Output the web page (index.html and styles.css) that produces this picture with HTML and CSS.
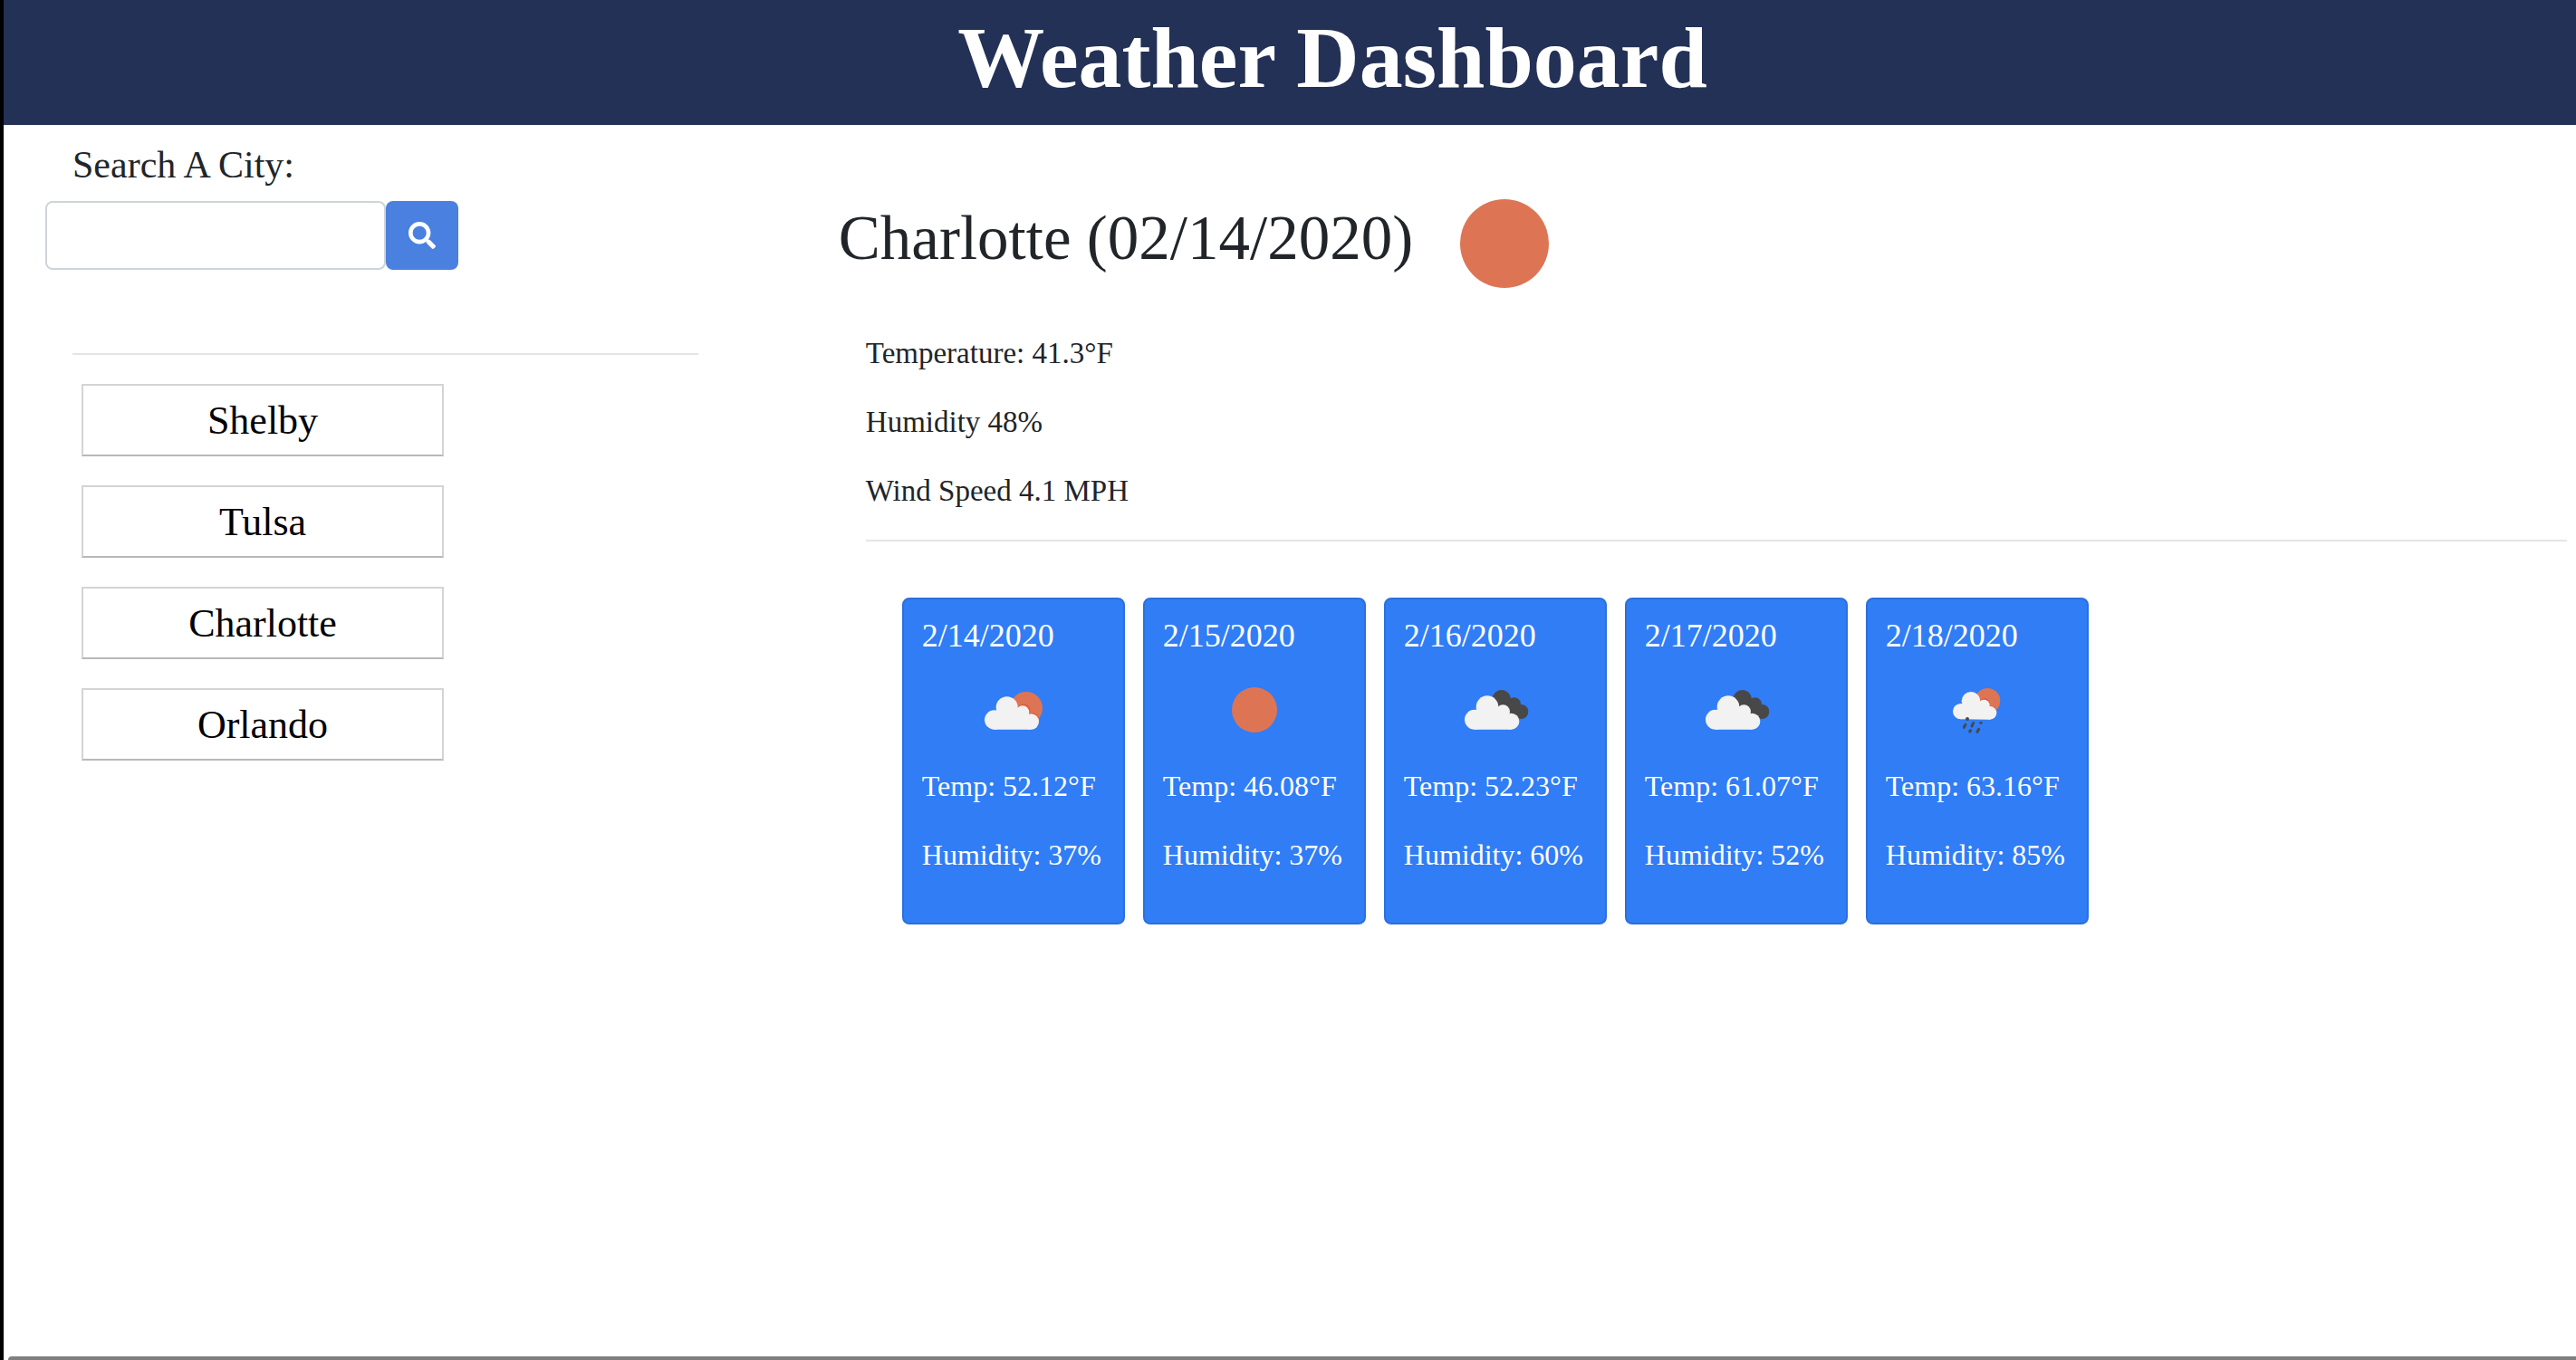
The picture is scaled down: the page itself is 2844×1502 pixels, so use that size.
FILE: index.html
```html
<!DOCTYPE html>
<html lang="en">
<head>
<meta charset="utf-8">
<meta name="viewport" content="width=device-width, initial-scale=1">
<title>Weather Dashboard</title>
<link rel="stylesheet" href="styles.css">
</head>
<body>
<header class="banner">
  <h1 class="banner-title">Weather Dashboard</h1>
</header>

<div class="layout">
  <aside class="sidebar">
    <form class="search">
      <label class="search-label" for="city">Search A City:</label>
      <div class="search-row">
        <input class="search-input" id="city" type="text">
        <button class="search-button" type="button" aria-label="Search">
          <svg class="search-icon" viewBox="0 0 512 512" aria-hidden="true"><path fill="currentColor" d="M505 442.700L405.300 343c-4.500-4.500-10.600-7-17-7H372c27.600-35.300 44-79.700 44-128C416 93.100 322.900 0 208 0S0 93.100 0 208s93.100 208 208 208c48.300 0 92.700-16.400 128-44v16.300c0 6.400 2.500 12.500 7 17l99.700 99.700c9.400 9.400 24.600 9.400 33.900 0l28.300-28.300c9.400-9.400 9.400-24.600.1-34zM208 336c-70.700 0-128-57.200-128-128 0-70.700 57.200-128 128-128 70.700 0 128 57.200 128 128 0 70.700-57.200 128-128 128z"/></svg>
        </button>
      </div>
    </form>
    <hr class="rule sidebar-rule">
    <nav class="history" aria-label="Recent cities">
      <button class="history-button" type="button">Shelby</button>
      <button class="history-button" type="button">Tulsa</button>
      <button class="history-button" type="button">Charlotte</button>
      <button class="history-button" type="button">Orlando</button>
    </nav>
  </aside>

  <main class="content">
    <div class="current">
      <h2 class="current-title">Charlotte (02/14/2020)</h2>
      <svg class="current-icon" viewBox="0 0 98 98" role="img" aria-label="Clear sky"><circle class="sun" cx="49" cy="49" r="49"/></svg>
    </div>
    <div class="details">
      <p class="reading">Temperature: 41.3°F</p>
      <p class="reading">Humidity 48%</p>
      <p class="reading">Wind Speed 4.1 MPH</p>
      <hr class="rule details-rule">
    </div>
    <section class="forecast" aria-label="Five day forecast">
      <article class="card">
        <h3 class="card-date">2/14/2020</h3>
        <svg class="card-icon" viewBox="-6 -18 300 300" role="img" aria-label="Few clouds">
          <circle class="sun" cx="186" cy="126" r="54"/>
          <g class="sun-shade"><circle cx="178" cy="134" r="22"/><circle cx="206" cy="166" r="24"/></g>
          <g class="cloud"><circle cx="80" cy="165" r="32"/><circle cx="122" cy="124" r="36"/><circle cx="174" cy="140" r="22"/><circle cx="202" cy="171" r="26"/><path d="M80 197V150L122 120L174 130L202 160V197Z"/></g>
        </svg>
        <p class="card-text">Temp: 52.12°F</p>
        <p class="card-text">Humidity: 37%</p>
      </article>
      <article class="card">
        <h3 class="card-date">2/15/2020</h3>
        <svg class="card-icon" viewBox="0 0 100 100" role="img" aria-label="Clear sky"><circle class="sun" cx="50" cy="50" r="25"/></svg>
        <p class="card-text">Temp: 46.08°F</p>
        <p class="card-text">Humidity: 37%</p>
      </article>
      <article class="card">
        <h3 class="card-date">2/16/2020</h3>
        <svg class="card-icon" viewBox="6 -18 300 300" role="img" aria-label="Broken clouds">
          <g class="dark-cloud"><circle cx="176" cy="97" r="31"/><circle cx="218" cy="113" r="22"/><circle cx="241" cy="138" r="24"/><circle cx="205" cy="134" r="30"/></g>
          <g class="cloud"><circle cx="87" cy="164" r="33"/><circle cx="129" cy="122" r="37"/><circle cx="181" cy="138" r="23"/><circle cx="208" cy="170" r="27"/><path d="M87 197V150L129 118L181 130L208 160V197Z"/></g>
        </svg>
        <p class="card-text">Temp: 52.23°F</p>
        <p class="card-text">Humidity: 60%</p>
      </article>
      <article class="card">
        <h3 class="card-date">2/17/2020</h3>
        <svg class="card-icon" viewBox="6 -18 300 300" role="img" aria-label="Broken clouds">
          <g class="dark-cloud"><circle cx="176" cy="97" r="31"/><circle cx="218" cy="113" r="22"/><circle cx="241" cy="138" r="24"/><circle cx="205" cy="134" r="30"/></g>
          <g class="cloud"><circle cx="87" cy="164" r="33"/><circle cx="129" cy="122" r="37"/><circle cx="181" cy="138" r="23"/><circle cx="208" cy="170" r="27"/><path d="M87 197V150L129 118L181 130L208 160V197Z"/></g>
        </svg>
        <p class="card-text">Temp: 61.07°F</p>
        <p class="card-text">Humidity: 52%</p>
      </article>
      <article class="card">
        <h3 class="card-date">2/18/2020</h3>
        <svg class="card-icon" viewBox="15 -18 300 300" role="img" aria-label="Rain">
          <circle class="sun" cx="199" cy="102" r="42"/>
          <g class="sun-shade"><circle cx="190" cy="111" r="18"/><circle cx="210" cy="138" r="19"/></g>
          <g class="cloud"><circle cx="110" cy="137" r="26"/><circle cx="144" cy="103" r="31"/><circle cx="187" cy="117" r="19"/><circle cx="207" cy="142" r="22"/><path d="M110 163V124L144 98L187 110L207 134V164Z"/></g>
          <g class="drops"><circle cx="132" cy="162" r="6"/><path d="M126 181L121 190M152 176L147 186M143 200L140 204M170 196L165 205"/><circle cx="177" cy="175" r="5"/></g>
        </svg>
        <p class="card-text">Temp: 63.16°F</p>
        <p class="card-text">Humidity: 85%</p>
      </article>
    </section>
  </main>
</div>
<footer class="bottom-edge"></footer>
</body>
</html>
```

FILE: styles.css
```css
* {
  box-sizing: border-box;
}

body {
  margin: 0;
  min-height: 100vh;
  display: flex;
  flex-direction: column;
  border-left: 4px solid #000;
  background: #fff;
  color: #212529;
  font-family: "Liberation Serif", serif;
}

h1, h2, h3, p {
  margin: 0;
}

button, input {
  font-family: inherit;
}

.banner {
  padding: 16px 0 26px 94px;
  background: #243156;
  color: #fff;
  text-align: center;
}

.banner-title {
  font-size: 96px;
  line-height: 96px;
  font-weight: 700;
}

.layout {
  flex: 1;
  display: grid;
  grid-template-columns: 27% 1fr;
}

.rule {
  height: 2px;
  border: 0;
  background: #e5e5e5;
}

/* Search and history */

.sidebar {
  padding: 19px 0 0 46px;
}

.search-label {
  display: block;
  margin: 0 0 15px 30px;
  font-size: 42px;
  line-height: 50px;
}

.search-row {
  display: flex;
}

.search-input {
  width: 376px;
  height: 76px;
  padding: 12px 24px;
  border: 2px solid #ced4da;
  border-radius: 8px;
  background: #fff;
  color: #495057;
  font-size: 32px;
}

.search-button {
  display: flex;
  align-items: center;
  justify-content: center;
  width: 80px;
  height: 76px;
  padding: 0;
  border: 0;
  border-radius: 8px;
  background: #4a80df;
  color: #fff;
}

.search-icon {
  width: 30px;
  height: 30px;
}

.sidebar-rule {
  margin: 92px 0 32px 30px;
}

.history {
  display: flex;
  flex-direction: column;
  gap: 32px;
  margin-left: 40px;
}

.history-button {
  width: 400px;
  height: 80px;
  padding: 0;
  border: 2px solid #d4d4d4;
  border-bottom-color: #b8b8b8;
  background: #fff;
  color: #000;
  font-size: 44px;
}

/* Current conditions */

.content {
  padding: 82px 10px 0 155px;
}

.current {
  display: flex;
  align-items: flex-start;
  gap: 52px;
}

.current-title {
  font-size: 69px;
  line-height: 86px;
  font-weight: 400;
}

.current-icon {
  width: 98px;
  height: 98px;
}

.details {
  display: flex;
  flex-direction: column;
  gap: 28px;
  margin: 48px 0 62px 30px;
}

.reading {
  font-size: 33px;
  line-height: 48px;
}

.details-rule {
  width: 100%;
  margin: 2px 0 0;
}

/* Five day forecast */

.forecast {
  display: flex;
  gap: 20px;
  margin-left: 70px;
}

.card {
  width: 246px;
  padding: 16px 20px 23px;
  border: 2px solid #2b70dc;
  border-radius: 8px;
  background: #307df6;
  color: #fff;
  white-space: nowrap;
}

.card-date {
  font-size: 36px;
  line-height: 48px;
  font-weight: 400;
}

.card-icon {
  display: block;
  width: 100px;
  height: 100px;
  margin: 8px auto 10px;
}

.card-text {
  margin-bottom: 28px;
  font-size: 32px;
  line-height: 48px;
}

.sun {
  fill: #dd7555;
}

.sun-shade {
  fill: #dc6042;
}

.cloud {
  fill: #f2f2f2;
}

.dark-cloud {
  fill: #484849;
}

.drops {
  fill: #484849;
  stroke: #484849;
  stroke-width: 9px;
  stroke-linecap: round;
}

.drops circle {
  stroke: none;
}

.bottom-edge {
  height: 4px;
  margin-left: 5px;
  border-top-left-radius: 4px;
  background: #7f7f80;
}
```
